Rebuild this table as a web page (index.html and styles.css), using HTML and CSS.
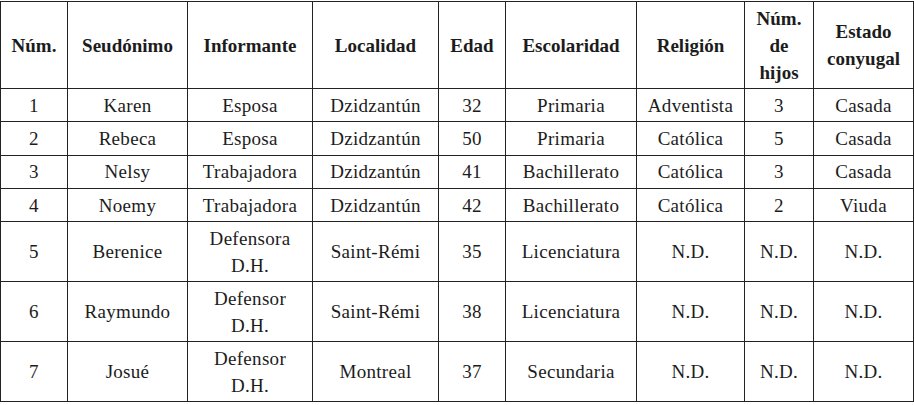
FILE: index.html
```html
<!DOCTYPE html>
<html lang="es">
<head>
<meta charset="utf-8">
<title>Tabla de informantes</title>
<link rel="stylesheet" href="styles.css">
</head>
<body>
<table class="data">
  <colgroup>
    <col class="c-num">
    <col class="c-seud">
    <col class="c-inf">
    <col class="c-loc">
    <col class="c-edad">
    <col class="c-esc">
    <col class="c-rel">
    <col class="c-hijos">
    <col class="c-est">
  </colgroup>
  <thead>
    <tr class="head">
      <th>Núm.</th>
      <th>Seudónimo</th>
      <th>Informante</th>
      <th>Localidad</th>
      <th>Edad</th>
      <th>Escolaridad</th>
      <th>Religión</th>
      <th>Núm.<br>de<br>hijos</th>
      <th>Estado<br>conyugal</th>
    </tr>
  </thead>
  <tbody>
    <tr class="short"><td>1</td><td>Karen</td><td>Esposa</td><td>Dzidzantún</td><td>32</td><td>Primaria</td><td>Adventista</td><td>3</td><td>Casada</td></tr>
    <tr class="short"><td>2</td><td>Rebeca</td><td>Esposa</td><td>Dzidzantún</td><td>50</td><td>Primaria</td><td>Católica</td><td>5</td><td>Casada</td></tr>
    <tr class="short"><td>3</td><td>Nelsy</td><td>Trabajadora</td><td>Dzidzantún</td><td>41</td><td>Bachillerato</td><td>Católica</td><td>3</td><td>Casada</td></tr>
    <tr class="short"><td>4</td><td>Noemy</td><td>Trabajadora</td><td>Dzidzantún</td><td>42</td><td>Bachillerato</td><td>Católica</td><td>2</td><td>Viuda</td></tr>
    <tr class="tall"><td>5</td><td>Berenice</td><td>Defensora<br>D.H.</td><td>Saint-Rémi</td><td>35</td><td>Licenciatura</td><td>N.D.</td><td>N.D.</td><td>N.D.</td></tr>
    <tr class="tall"><td>6</td><td>Raymundo</td><td>Defensor<br>D.H.</td><td>Saint-Rémi</td><td>38</td><td>Licenciatura</td><td>N.D.</td><td>N.D.</td><td>N.D.</td></tr>
    <tr class="tall"><td>7</td><td>Josué</td><td>Defensor<br>D.H.</td><td>Montreal</td><td>37</td><td>Secundaria</td><td>N.D.</td><td>N.D.</td><td>N.D.</td></tr>
  </tbody>
</table>
</body>
</html>
```
FILE: styles.css
```css
html, body {
  margin: 0;
  padding: 0;
  background: #ffffff;
}

body {
  padding: 1px 0 0 0;
}

.data {
  border-collapse: collapse;
  table-layout: fixed;
  width: 913px;
  font-family: "Liberation Serif", "Times New Roman", serif;
  font-size: 19px;
  line-height: 27px;
  color: #1c1c1c;
}

.data th,
.data td {
  border: 1px solid #222222;
  padding: 0 2px;
  text-align: center;
  vertical-align: middle;
  letter-spacing: 0.3px;
}

.data th {
  font-weight: bold;
  letter-spacing: 0;
}

.data tr.head {
  height: 87px;
}

.data tr.short {
  height: 33.35px;
}

.data tr.tall {
  height: 60px;
}

.c-num { width: 67px; }
.c-seud { width: 120px; }
.c-inf { width: 125px; }
.c-loc { width: 126px; }
.c-edad { width: 67px; }
.c-esc { width: 131px; }
.c-rel { width: 108px; }
.c-hijos { width: 69px; }
.c-est { width: 100px; }
```
